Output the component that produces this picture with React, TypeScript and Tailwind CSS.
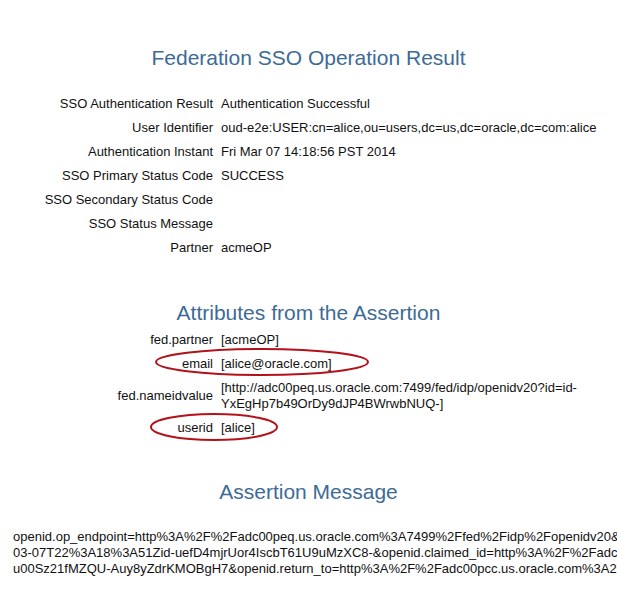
import React from "react";

const resultRows: [string, string][] = [
  ["SSO Authentication Result", "Authentication Successful"],
  ["User Identifier", "oud-e2e:USER:cn=alice,ou=users,dc=us,dc=oracle,dc=com:alice"],
  ["Authentication Instant", "Fri Mar 07 14:18:56 PST 2014"],
  ["SSO Primary Status Code", "SUCCESS"],
  ["SSO Secondary Status Code", ""],
  ["SSO Status Message", ""],
  ["Partner", "acmeOP"],
];

const attrRows: [string, string][] = [
  ["fed.partner", "[acmeOP]"],
  ["email", "[alice@oracle.com]"],
  ["fed.nameidvalue", "[http://adc00peq.us.oracle.com:7499/fed/idp/openidv20?id=id-YxEgHp7b49OrDy9dJP4BWrwbNUQ-]"],
  ["userid", "[alice]"],
];

const messageLines = [
  "openid.op_endpoint=http%3A%2F%2Fadc00peq.us.oracle.com%3A7499%2Ffed%2Fidp%2Fopenidv20&openid.response_nonce=2014-",
  "03-07T22%3A18%3A51Zid-uefD4mjrUor4IscbT61U9uMzXC8-&openid.claimed_id=http%3A%2F%2Fadc00peq.us.oracle.com%3A7499",
  "u00Sz21fMZQU-Auy8yZdrKMOBgH7&openid.return_to=http%3A%2F%2Fadc00pcc.us.oracle.com%3A20621%2Fsso",
];

const Heading: React.FC<{ children: React.ReactNode; className?: string }> = ({ children, className }) => (
  <h2 className={"text-center text-[21px] leading-[24px] text-[#3d6b96] " + (className ?? "")}>{children}</h2>
);

export default function App() {
  return (
    <div
      className="relative w-[617px] h-[597px] overflow-hidden bg-white text-[13px] text-[#111]"
      style={{ fontFamily: '"Liberation Sans", Arial, sans-serif' }}
    >
      <Heading className="mt-[46px]">Federation SSO Operation Result</Heading>

      {/* result table */}
      <div className="mt-[22px] grid grid-cols-[213px_auto] gap-x-2">
        {resultRows.map(([label, value]) => (
          <React.Fragment key={label}>
            <div className="text-right leading-[16px] py-1 whitespace-nowrap">{label}</div>
            <div className="leading-[16px] py-1 whitespace-nowrap">{value}</div>
          </React.Fragment>
        ))}
      </div>

      <Heading className="mt-[41px]">Attributes from the Assertion</Heading>

      <div className="mt-[3px] grid grid-cols-[213px_360px] gap-x-2 items-center">
        {attrRows.map(([label, value]) => (
          <React.Fragment key={label}>
            <div className="text-right leading-[16px] py-1">{label}</div>
            <div className="leading-[16px] py-1">{value}</div>
          </React.Fragment>
        ))}
      </div>

      <Heading className="mt-[40px]">Assertion Message</Heading>

      <div className="mt-[25px] pl-[13px] leading-[16px]">
        {messageLines.map((line) => (
          <div key={line} className="whitespace-nowrap">{line}</div>
        ))}
      </div>

      {/* hand-drawn annotation ellipses */}
      <svg className="pointer-events-none absolute left-0 top-0" width="617" height="597">
        <ellipse cx="262" cy="362" rx="106" ry="13" fill="none" stroke="#b3121b" strokeWidth="2" />
        <ellipse cx="214" cy="427" rx="63" ry="13" fill="none" stroke="#b3121b" strokeWidth="2" />
      </svg>
    </div>
  );
}
